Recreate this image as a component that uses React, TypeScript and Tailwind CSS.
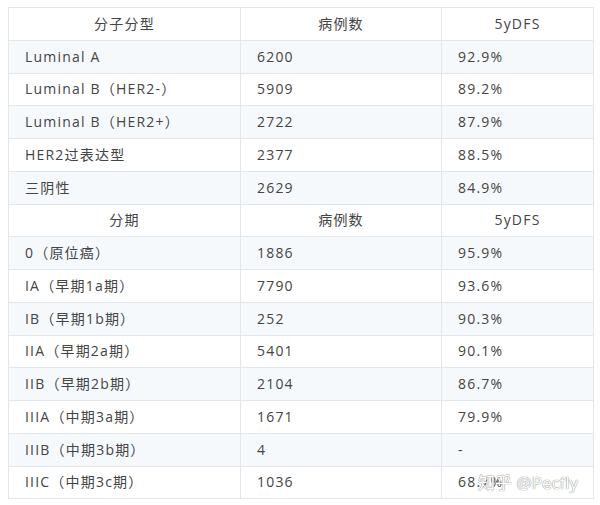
import { FC } from 'react';

type Row = { kind: 'head' | 'data'; cells: [string, string, string] };

const rows: Row[] = [
  { kind: 'head', cells: ['分子分型', '病例数', '5yDFS'] },
  { kind: 'data', cells: ['Luminal A', '6200', '92.9%'] },
  { kind: 'data', cells: ['Luminal B（HER2-）', '5909', '89.2%'] },
  { kind: 'data', cells: ['Luminal B（HER2+）', '2722', '87.9%'] },
  { kind: 'data', cells: ['HER2过表达型', '2377', '88.5%'] },
  { kind: 'data', cells: ['三阴性', '2629', '84.9%'] },
  { kind: 'head', cells: ['分期', '病例数', '5yDFS'] },
  { kind: 'data', cells: ['0（原位癌）', '1886', '95.9%'] },
  { kind: 'data', cells: ['IA（早期1a期）', '7790', '93.6%'] },
  { kind: 'data', cells: ['IB（早期1b期）', '252', '90.3%'] },
  { kind: 'data', cells: ['IIA（早期2a期）', '5401', '90.1%'] },
  { kind: 'data', cells: ['IIB（早期2b期）', '2104', '86.7%'] },
  { kind: 'data', cells: ['IIIA（中期3a期）', '1671', '79.9%'] },
  { kind: 'data', cells: ['IIIB（中期3b期）', '4', '-'] },
  { kind: 'data', cells: ['IIIC（中期3c期）', '1036', '68.7%'] },
];

const App: FC = () => {
  return (
    <div
      className="relative w-[600px] h-[505px] bg-white px-2 pt-[7px] text-[#444]"
      style={{ fontFamily: '"Open Sans", "Noto Sans CJK SC", sans-serif' }}
    >
      <table className="w-[585px] border-collapse table-fixed text-[14px] tracking-[1.2px]">
        <colgroup>
          <col className="w-[232px]" />
          <col className="w-[201px]" />
          <col className="w-[152px]" />
        </colgroup>
        <tbody>
          {rows.map((row, i) => (
            <tr key={i} className={i % 2 === 1 ? 'bg-[#f6f9fc]' : 'bg-white'}>
              {row.cells.map((c, j) => (
                <td
                  key={j}
                  className={
                    'h-[32.75px] border border-[#e3e6ea] px-4 py-0 leading-none whitespace-nowrap ' +
                    (row.kind === 'head' ? 'text-center' : 'text-left')
                  }
                >
                  {c}
                </td>
              ))}
            </tr>
          ))}
        </tbody>
      </table>

      {/* watermark */}
      <div
        className="absolute left-[478px] top-[470px] text-[17px] text-white whitespace-nowrap"
        style={{ textShadow: '0 0 1px #888, 0 0 1px #888' }}
      >
        知乎 @Pecfly
      </div>
    </div>
  );
};

export default App;
